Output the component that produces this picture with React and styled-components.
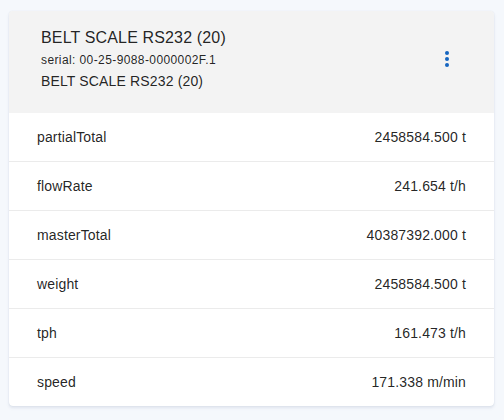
import React from 'react';
import styled, { createGlobalStyle } from 'styled-components';

const GlobalStyle = createGlobalStyle`
  html, body {
    margin: 0;
    padding: 0;
    background: #f5f8fc;
    font-family: "Liberation Sans", Arial, sans-serif;
    color: rgba(0, 0, 0, 0.87);
  }
`;

const Page = styled.div`
  width: 504px;
  height: 420px;
  padding: 11px 10px 0 9px;
  box-sizing: border-box;
`;

const Card = styled.div`
  background: #fff;
  border-radius: 4px;
  overflow: hidden;
  box-shadow: 0 2px 3px rgba(120, 140, 170, 0.18), 0 0 1px rgba(120, 140, 170, 0.25);
`;

const Header = styled.div`
  display: flex;
  align-items: center;
  justify-content: space-between;
  background: #f3f3f3;
  height: 102px;
  box-sizing: border-box;
  padding: 0 35px 7px 32px;
`;

const HeaderText = styled.div`
  display: flex;
  flex-direction: column;
`;

const Title = styled.div`
  font-size: 16px;
  line-height: 24px;
  letter-spacing: 0.15px;
`;

const Serial = styled.div`
  font-size: 12px;
  line-height: 21px;
  letter-spacing: 0.4px;
`;

const Subtitle = styled.div`
  font-size: 14px;
  line-height: 20px;
  letter-spacing: 0.15px;
`;

const MenuButton = styled.button`
  border: none;
  background: transparent;
  padding: 0;
  width: 24px;
  height: 24px;
  display: flex;
  align-items: center;
  justify-content: center;
  color: #1565c0;
  cursor: pointer;
`;

const Row = styled.div`
  display: flex;
  align-items: center;
  justify-content: space-between;
  height: 48px;
  padding: 0 28px;
  font-size: 14px;
  letter-spacing: 0.15px;
  border-bottom: ${p => (p.last ? 'none' : '1px solid #ebebeb')};
`;

const rows = [
  ['partialTotal', '2458584.500 t'],
  ['flowRate', '241.654 t/h'],
  ['masterTotal', '40387392.000 t'],
  ['weight', '2458584.500 t'],
  ['tph', '161.473 t/h'],
  ['speed', '171.338 m/min'],
];

const App = () => {
  return (
    <Page>
      <GlobalStyle />
      <Card>
        <Header>
          <HeaderText>
            <Title>BELT SCALE RS232 (20)</Title>
            <Serial>serial: 00-25-9088-0000002F.1</Serial>
            <Subtitle>BELT SCALE RS232 (20)</Subtitle>
          </HeaderText>
          <MenuButton>
            <svg width="24" height="24" viewBox="0 0 24 24" fill="currentColor">
              <circle cx="12" cy="6" r="2" />
              <circle cx="12" cy="12" r="2" />
              <circle cx="12" cy="18" r="2" />
            </svg>
          </MenuButton>
        </Header>
        {rows.map(([name, value], i) => (
          <Row key={name} last={i === rows.length - 1}>
            <span>{name}</span>
            <span>{value}</span>
          </Row>
        ))}
      </Card>
    </Page>
  );
};

export default App;
